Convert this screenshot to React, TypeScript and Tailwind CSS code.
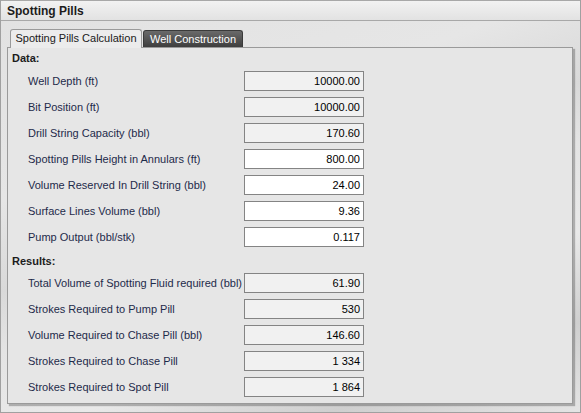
import React from "react";

const dataRows: { label: string; value: string; ro: boolean }[] = [
  { label: "Well Depth (ft)", value: "10000.00", ro: true },
  { label: "Bit Position (ft)", value: "10000.00", ro: true },
  { label: "Drill String Capacity (bbl)", value: "170.60", ro: true },
  { label: "Spotting Pills Height in Annulars (ft)", value: "800.00", ro: false },
  { label: "Volume Reserved In Drill String (bbl)", value: "24.00", ro: false },
  { label: "Surface Lines Volume (bbl)", value: "9.36", ro: false },
  { label: "Pump Output (bbl/stk)", value: "0.117", ro: false },
];

const resultRows: { label: string; value: string }[] = [
  { label: "Total Volume of Spotting Fluid required (bbl)", value: "61.90" },
  { label: "Strokes Required to Pump Pill", value: "530" },
  { label: "Volume Required to Chase Pill (bbl)", value: "146.60" },
  { label: "Strokes Required to Chase Pill", value: "1 334" },
  { label: "Strokes Required to Spot Pill", value: "1 864" },
];

function Row({ label, value, ro }: { label: string; value: string; ro: boolean }) {
  return (
    <div className="flex items-center h-[26px]">
      <div className="w-[236px] pl-[20px] text-[#1e2a4a] whitespace-nowrap">{label}</div>
      <div
        className={
          "w-[120px] h-[20px] border border-[#848484] flex items-center justify-end pr-[3px] text-black " +
          (ro ? "bg-[#f1f1f1]" : "bg-white")
        }
      >
        {value}
      </div>
    </div>
  );
}

export default function App() {
  return (
    <div
      className="w-[581px] h-[413px] overflow-hidden border-x border-b border-[#a0a0a0] flex flex-col text-[11px]"
      style={{ fontFamily: "Tahoma, 'Liberation Sans', Arial, sans-serif" }}
    >
      <div className="h-[21px] shrink-0 border-t border-b border-[#a8a8a8] bg-[linear-gradient(#f2f2f2,#e2e2e2)] flex items-center pl-[6px] font-bold text-[12px] text-[#1c1c1c]">
        Spotting Pills
      </div>
      <div className="flex-1 bg-[#dedede] bg-[linear-gradient(160deg,#e2e2e2_0%,#e6e6e6_30%,#d9d9d9_45%,#e4e4e4_55%,#e9e9e9_70%,#cfcfcf_85%,#e4e4e4_100%)] pt-[7px] pl-[6px] pr-[7px] flex flex-col">
        <div className="flex items-end pl-[3px] h-[19px]">
          <div className="h-[19px] w-[132px] justify-center border border-b-0 border-[#9a9a9a] rounded-t-[3px] bg-[#ececec] flex items-center text-[#202020] relative z-10 -mb-px pb-[1px]">
            Spotting Pills Calculation
          </div>
          <div className="h-[17px] w-[100px] justify-center ml-[1px] border border-b-0 border-[#3a3a3a] rounded-t-[3px] bg-[linear-gradient(#6a6a6a,#3e3e3e)] flex items-center text-white">
            Well Construction
          </div>
        </div>
        <div className="w-[566px] h-[357px] border border-[#9a9a9a] bg-[#e6e6e6] shadow-[2px_2px_1px_rgba(0,0,0,0.25)] pt-[1px]">
          <div className="pl-[4px] font-bold text-[#1c1c1c] h-[19px] flex items-center">Data:</div>
          {dataRows.map((r) => (
            <Row key={r.label} label={r.label} value={r.value} ro={r.ro} />
          ))}
          <div className="pl-[4px] font-bold text-[#1c1c1c] h-[20px] flex items-end pb-[1px]">Results:</div>
          {resultRows.map((r) => (
            <Row key={r.label} label={r.label} value={r.value} ro={true} />
          ))}
        </div>
      </div>
    </div>
  );
}
